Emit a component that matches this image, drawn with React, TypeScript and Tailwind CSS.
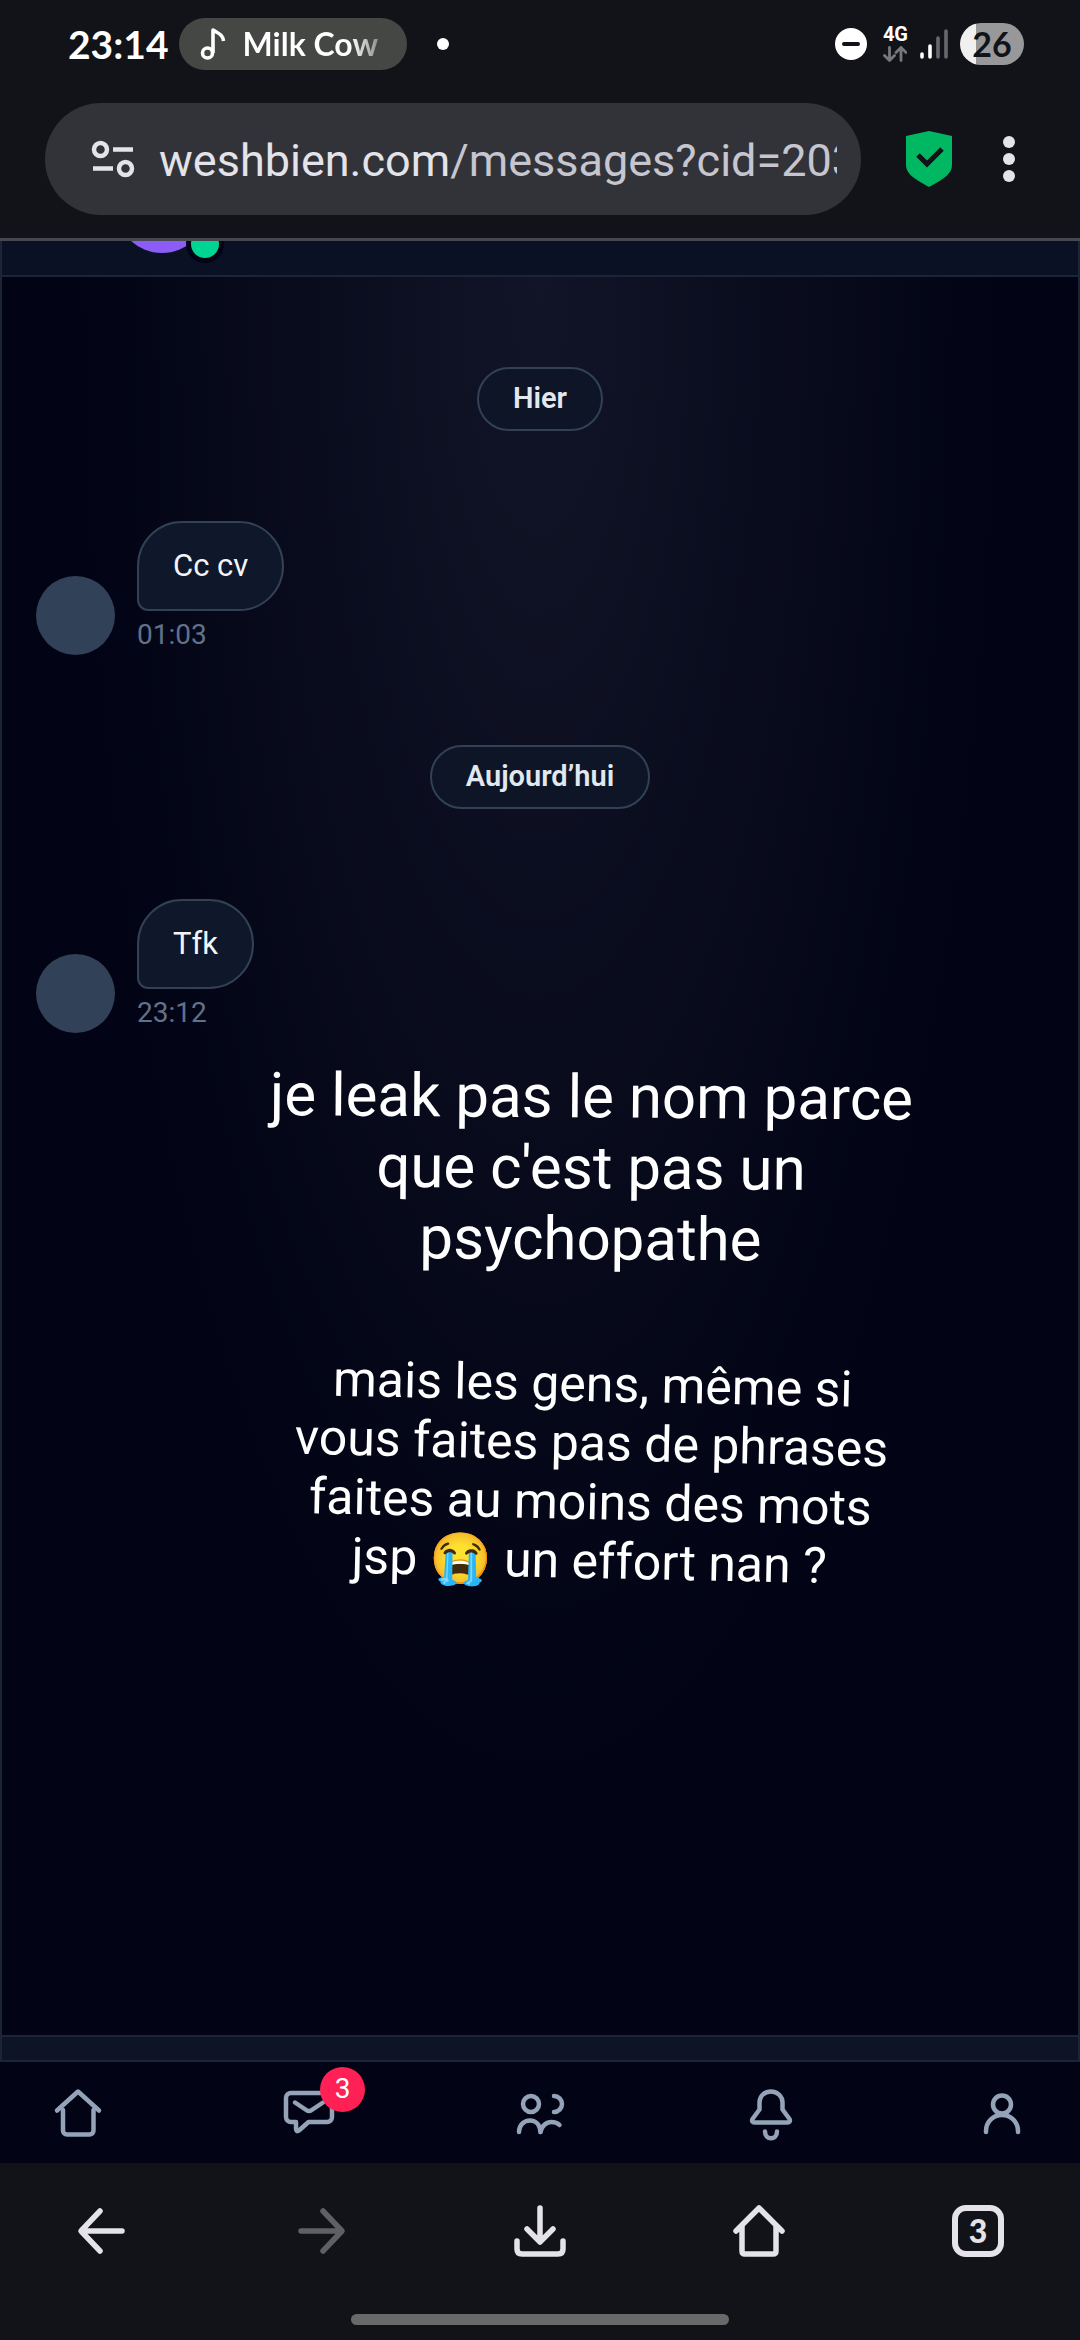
import type { ReactNode } from "react";

type ChatMessage = {
  day: string;
  text: string;
  time: string;
};

const messages: ChatMessage[] = [
  { day: "Hier", text: "Cc cv", time: "01:03" },
  { day: "Aujourd’hui", text: "Tfk", time: "23:12" },
];

export default function App() {
  return (
    <div className="flex min-h-screen flex-col overflow-hidden bg-[#121318] font-['Roboto',sans-serif] text-white">
      <StatusBar />
      <AddressBar />
      <ChatPage />
      <SiteNav />
      <BrowserNav />
    </div>
  );
}

function StatusBar() {
  return (
    <div className="flex h-22 items-center pr-14 pl-17">
      <span className="font-['Lato',sans-serif] text-[39px] leading-none font-bold">
        23:14
      </span>

      <div className="ml-2.5 flex h-13 w-57 items-center rounded-full bg-[#454745] pl-5">
        <svg viewBox="0 0 28 32" className="h-8 w-7" fill="none" stroke="#fff" strokeWidth="3.600">
          <circle cx="8.500" cy="25" r="5" />
          <path d="M14 25V2c4 3 10 4 10.500 11" strokeLinejoin="round" />
        </svg>
        <span className="ml-4 bg-linear-to-r from-white from-80% to-white/40 bg-clip-text font-['Lato',sans-serif] text-[32px] leading-none font-bold whitespace-nowrap text-transparent">
          Milk Cow
        </span>
      </div>

      <span className="ml-[30px] size-3 rounded-full bg-white" />

      <div className="ml-auto flex items-center">
        <svg viewBox="0 0 32 32" className="size-8">
          <circle cx="16" cy="16" r="16" fill="#fff" />
          <path d="M9 16h14" stroke="#121318" strokeWidth="4" strokeLinecap="round" />
        </svg>

        <div className="ml-4 flex flex-col items-center">
          <span className="text-xl leading-4 font-bold">4G</span>
          <svg viewBox="0 0 24 16" className="mt-1 h-4 w-6" fill="none" stroke="#77787c" strokeWidth="2.800" strokeLinecap="round" strokeLinejoin="round">
            <path d="M6.500 1.500v13M1.500 9.500l5 5 5-5M18 14.500v-13M13 6.500l5-5 5 5" />
          </svg>
        </div>

        <svg viewBox="0 0 28 30" className="ml-3 h-[30px] w-7" strokeWidth="3.600" strokeLinecap="round">
          <path d="M2 25v3M10 17v11" stroke="#fff" />
          <path d="M18 9v19M26 2v26" stroke="#67686c" />
        </svg>

        <div className="ml-3 flex h-[42px] w-16 items-center justify-center rounded-full bg-linear-to-r from-[#f0f0f0] from-25% to-[#98989a] to-25%">
          <span className="font-['Lato',sans-serif] text-[34px] leading-none font-bold text-[#121318]">
            26
          </span>
        </div>
      </div>
    </div>
  );
}

function AddressBar() {
  return (
    <div className="flex items-center border-b-3 border-[#464751] pt-[15px] pr-16 pb-[23px] pl-[45px]">
      <div className="flex h-28 min-w-0 flex-1 items-center rounded-full bg-[#323338] pr-6 pl-[46px]">
        <svg viewBox="0 0 44 38" className="h-[38px] w-11 shrink-0" fill="none" stroke="#e3e3e9" strokeWidth="4.500">
          <circle cx="9.500" cy="9.500" r="6.500" />
          <path d="M22 9.500h20M2 28.500h20" />
          <circle cx="34.500" cy="28.500" r="6.500" />
        </svg>
        <p className="ml-6 overflow-hidden pt-1 text-[45px] leading-[56px] whitespace-nowrap text-[#c5c6d0]">
          <span className="text-[#e3e3e9]">weshbien.com</span>/messages?cid=203
        </p>
      </div>

      <button aria-label="Protection" className="ml-[45px]">
        <svg viewBox="0 0 46 56" className="h-14 w-[46px]">
          <path d="M23 0 46 5v28c0 9-5 13-23 23C5 46 0 42 0 33V5z" fill="#00b862" />
          <path d="M12 24l9 9 15-15" fill="none" stroke="#121318" strokeWidth="5" />
        </svg>
      </button>
      <button aria-label="Menu" className="ml-[50px]">
        <svg viewBox="0 0 14 48" className="h-12 w-3.5" fill="#e3e3e9">
          <circle cx="7" cy="7" r="6" />
          <circle cx="7" cy="24" r="6" />
          <circle cx="7" cy="41" r="6" />
        </svg>
      </button>
    </div>
  );
}

function ChatPage() {
  return (
    <main className="flex flex-1 flex-col border-x-2 border-b-2 border-[#1c2536] bg-[#020415]">
      <header className="flex h-9 items-end overflow-hidden border-b-2 border-[#1c2536] bg-[#0b1124] pb-[22px] pl-[114px]">
        <div className="relative size-23 rounded-full bg-[#8b5cf6]">
          <span className="absolute -right-4 -bottom-2.5 size-9.5 rounded-full border-5 border-[#020415] bg-[#00d492]" />
        </div>
      </header>

      <section className="flex-1 bg-[radial-gradient(ellipse_at_top,#121527,transparent_60%)] px-[34px] pt-[90px]">
        <div className="flex flex-col gap-[90px]">
          {messages.map((message) => (
            <Message key={message.time} message={message} />
          ))}
        </div>

        <p className="mt-7 rotate-[0.4deg] pl-[102px] text-center text-[60px] leading-[71px]">
          je leak pas le nom parce
          <br />
          que c'est pas un
          <br />
          psychopathe
        </p>
        <p className="mt-20 rotate-[1.2deg] pl-[102px] text-center text-[50px] leading-[59px]">
          mais les gens, même si
          <br />
          vous faites pas de phrases
          <br />
          faites au moins des mots
          <br />
          jsp 😭 un effort nan ?
        </p>
      </section>

      <footer className="h-[25px] border-t-2 border-[#1c2536] bg-[#0c1425]" />
    </main>
  );
}

function Message({ message }: { message: ChatMessage }) {
  return (
    <div className="flex flex-col gap-[90px]">
      <span className="flex h-16 items-center self-center rounded-full border-2 border-[#334155] bg-[#0d1526] px-[34px] text-[29px] font-semibold text-[#e2e8f0]">
        {message.day}
      </span>
      <div className="flex items-end gap-[22px]">
        <span className="size-[79px] rounded-full bg-[#314158]" />
        <div className="pb-1">
          <p className="flex h-[90px] w-fit items-center rounded-[45px] rounded-bl-[11px] border-2 border-[#334155] bg-[#0f172a] px-[34px] text-[31px] text-[#f1f5f9]">
            {message.text}
          </p>
          <time className="mt-2 block text-[28px] leading-8 text-[#62718a]">
            {message.time}
          </time>
        </div>
      </div>
    </div>
  );
}

function SiteNav() {
  return (
    <nav className="flex h-[101px] items-center justify-between bg-[#020415] px-[54px] text-[#94a3b8]">
      <NavLink label="Accueil">
        <path d="M3 21.500 24 2.500l21 19" />
        <path d="M9 21v20.500a4 4 0 0 0 4 4h22.500a4 4 0 0 0 4-4V21" />
      </NavLink>
      <NavLink label="Messages" badge={3}>
        <path d="M6 4h36a5 5 0 0 1 5 5v19a5 5 0 0 1-5 5H23.500l-9.500 8.500q-3 2-3-2v-6.500H6a5 5 0 0 1-5-5V9a5 5 0 0 1 5-5z" />
        <path d="M10 13.500l12 8q2 1 4 0l12-8" />
      </NavLink>
      <NavLink label="Amis">
        <circle cx="15" cy="15" r="8" />
        <path d="M3 43c0-7 5-11.500 11-11.500S24 36 24.500 43" />
        <path d="M38 7a8 8 0 0 1 0 16" />
        <path d="M24.500 43c1-6 6-10 11-10 3.500 0 6 1 8 3" />
      </NavLink>
      <NavLink label="Notifications">
        <path d="M24 2.500c-7 0-11.500 5-11.500 11v7L5.500 30c-1 2 0 3.500 2 3.500h33c2 0 3-1.500 2-3.500l-7-9.500v-7c0-6-5-11-11.500-11z" />
        <path d="M18 42.500c0 9 12 9 12 0" />
      </NavLink>
      <NavLink label="Profil">
        <circle cx="24" cy="15.500" r="9" />
        <path d="M8 43v-1c0-9 7-16 16-16s16 7 16 16v1" />
      </NavLink>
    </nav>
  );
}

function NavLink({
  label,
  badge,
  children,
}: {
  label: string;
  badge?: number;
  children: ReactNode;
}) {
  return (
    <a href="#" aria-label={label} className="relative">
      <svg
        viewBox="0 0 48 48"
        className="size-12 overflow-visible"
        fill="none"
        stroke="currentColor"
        strokeWidth="4.500"
        strokeLinecap="round"
        strokeLinejoin="round"
      >
        {children}
      </svg>
      {badge && (
        <span className="absolute -top-[22px] -right-8 flex size-[45px] items-center justify-center rounded-full bg-[#ff2056] text-[28px] leading-none text-white">
          {badge}
        </span>
      )}
    </a>
  );
}

function BrowserNav() {
  return (
    <div className="flex flex-col items-center text-[#e3e3e9]">
      <nav className="flex h-[136px] items-center justify-between self-stretch px-[76px]">
        <BrowserButton label="Retour">
          <path d="M46 26H6M24 6 5 26l19 20" />
        </BrowserButton>
        <BrowserButton label="Suivant" disabled>
          <path d="M6 26h40M28 6l19 20-19 20" />
        </BrowserButton>
        <BrowserButton label="Télécharger">
          <path d="M26 3v34M13 24l13 13 13-13M3 36v8q0 5 5 5h36q5 0 5-5v-8" />
        </BrowserButton>
        <BrowserButton label="Page d'accueil">
          <path d="M3 26 26 3l23 23M9 21v25q0 3 3 3h28q3 0 3-3V21" />
        </BrowserButton>
        <button
          aria-label="Onglets"
          className="flex size-13 items-center justify-center rounded-[14px] border-6 border-[#e3e3e9] font-['Lato',sans-serif] text-[32px] leading-none font-black"
        >
          3
        </button>
      </nav>
      <span className="mt-[15px] mb-[15px] h-[11px] w-[35%] rounded-full bg-[#696969]" />
    </div>
  );
}

function BrowserButton({
  label,
  disabled,
  children,
}: {
  label: string;
  disabled?: boolean;
  children: ReactNode;
}) {
  return (
    <button aria-label={label} disabled={disabled} className="disabled:text-[#5f6064]">
      <svg
        viewBox="0 0 52 52"
        className="size-13"
        fill="none"
        stroke="currentColor"
        strokeWidth="5.500"
        strokeLinecap="round"
        strokeLinejoin="round"
      >
        {children}
      </svg>
    </button>
  );
}
